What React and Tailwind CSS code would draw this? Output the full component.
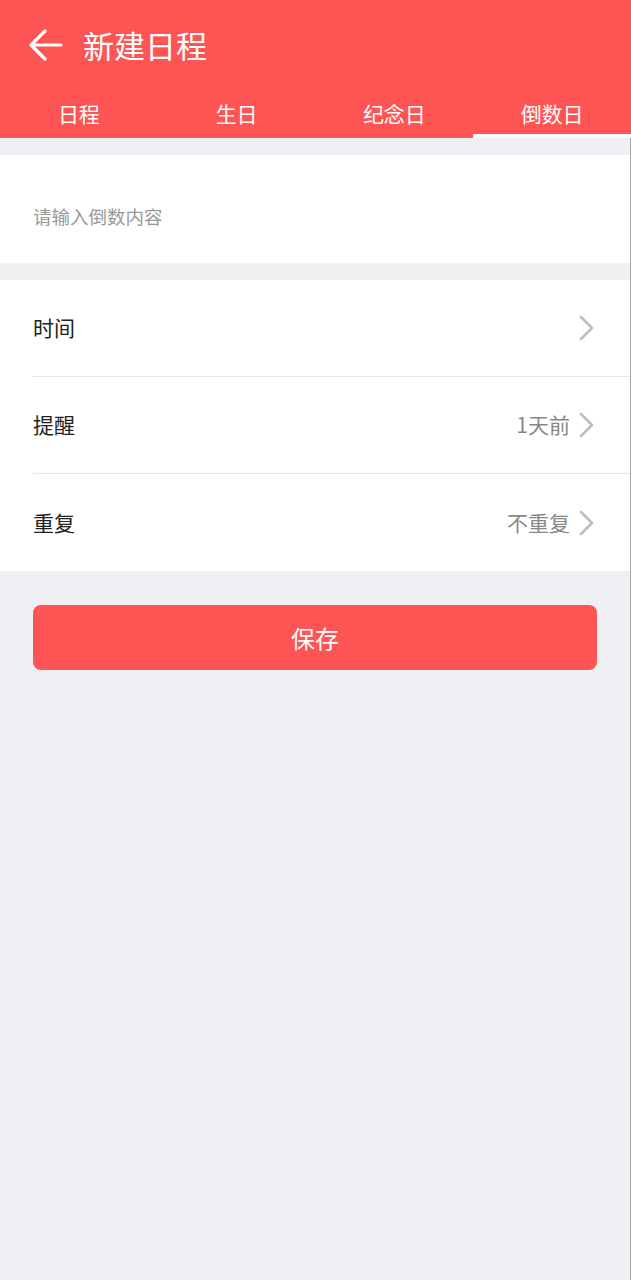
import { useState } from 'react'

const TABS = ['日程', '生日', '纪念日', '倒数日']

const ROWS = [
  { label: '时间', value: '' },
  { label: '提醒', value: '1天前' },
  { label: '重复', value: '不重复' },
]

const FONT = { fontFamily: '"Noto Sans CJK SC", "Noto Sans", sans-serif' }

function Chevron() {
  return (
    <svg width="16" height="26" viewBox="0 0 16 26" fill="none" stroke="#bdbdbd" strokeWidth="2.6" strokeLinecap="round" strokeLinejoin="round">
      <path d="M3 2l11 11L3 24" />
    </svg>
  )
}

export default function App() {
  const [tab, setTab] = useState(3)

  return (
    <div className="min-h-[1280px] bg-[#eef0f3] flex flex-col" style={FONT}>
      {/* header */}
      <header className="bg-[#ff5454] text-white">
        <div className="h-[90px] flex items-center pl-[29px] pb-[1px]">
          <svg width="34" height="32" viewBox="0 0 34 32" fill="none" stroke="white" strokeWidth="3.2" strokeLinecap="round" strokeLinejoin="round">
            <path d="M32 16H3M16 2L2 16l14 14" />
          </svg>
          <h1 className="ml-[20px] text-[31px] leading-none font-normal">新建日程</h1>
        </div>
        <nav className="flex h-[48px]">
          {TABS.map((t, i) => (
            <button
              key={t}
              onClick={() => setTab(i)}
              className="flex-1 flex flex-col justify-between items-center text-[21px] leading-none"
            >
              <span className="pt-[13px]">{t}</span>
              <span className={`h-[4px] w-full ${i === tab ? 'bg-white' : 'bg-transparent'}`} />
            </button>
          ))}
        </nav>
      </header>

      <div className="flex-1 flex flex-col border-r border-[#a8a8a8]">
        {/* input */}
        <div className="mt-[17px] bg-white h-[108px] flex items-center px-[33px]">
          <input
            placeholder="请输入倒数内容"
            className="w-full bg-transparent outline-none text-[18.5px] text-[#333] placeholder-[#999] pt-[16px]"
          />
        </div>

        {/* list */}
        <div className="mt-[17px] bg-white">
          {ROWS.map((r, i) => (
            <div key={r.label} className="pl-[33px]">
              <div className={`h-[97px] flex items-center pr-[36px] ${i < ROWS.length - 1 ? 'border-b border-[#e6e6e6]' : ''}`}>
                <span className="text-[21px] text-[#222] flex-1">{r.label}</span>
                {r.value && <span className="text-[21px] text-[#888] mr-[8px]">{r.value}</span>}
                <Chevron />
              </div>
            </div>
          ))}
        </div>

        {/* save */}
        <div className="px-[33px] pt-[34px]">
          <button className="w-full h-[65px] rounded-[8px] bg-[#ff5454] text-white text-[24px]">保存</button>
        </div>
      </div>
    </div>
  )
}
